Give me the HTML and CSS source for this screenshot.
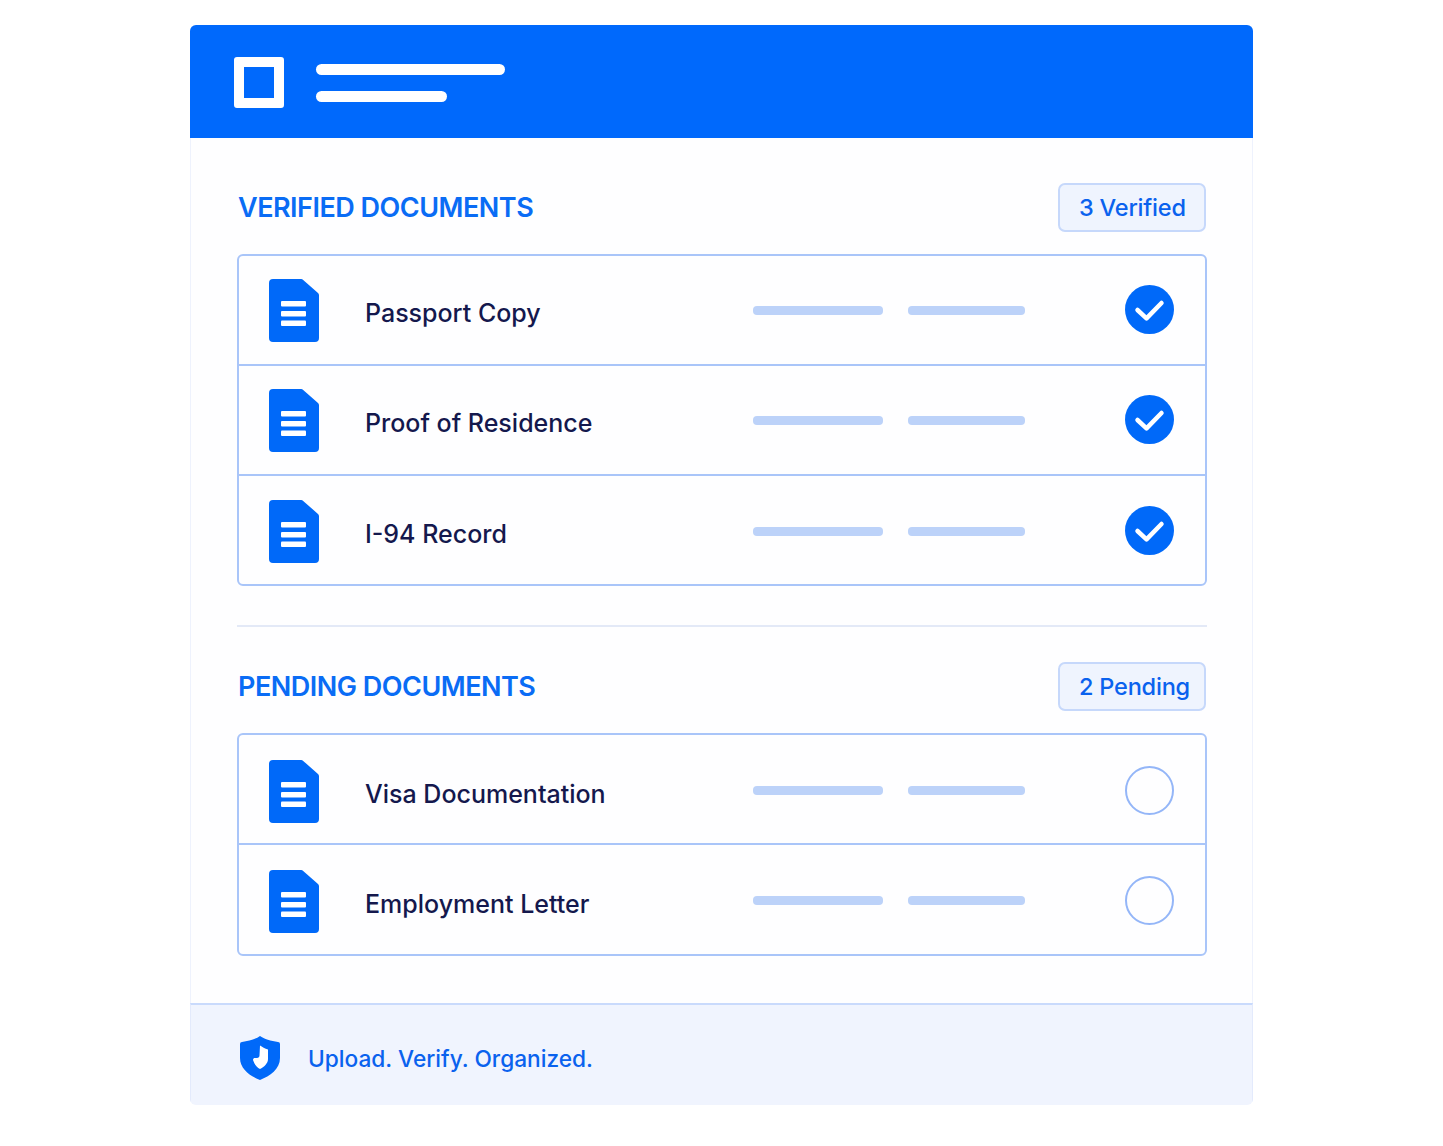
FILE: index.html
```html
<!DOCTYPE html>
<html lang="en">
<head>
<meta charset="utf-8">
<title>Documents</title>
<link rel="stylesheet" href="styles.css">
</head>
<body>
<svg class="defs" width="0" height="0" aria-hidden="true">
  <symbol id="doc" viewBox="0 0 50 63">
    <path d="M4 0H32a3 3 0 0 1 2.200 .9L49 14a3 3 0 0 1 1 2.200V59a4 4 0 0 1-4 4H4a4 4 0 0 1-4-4V4a4 4 0 0 1 4-4Z" fill="#0069f9"/>
    <rect x="12" y="22" width="25" height="5.500" rx="1" fill="#fff"/>
    <rect x="12" y="32" width="25" height="5.500" rx="1" fill="#fff"/>
    <rect x="12" y="41.500" width="25" height="5.500" rx="1" fill="#fff"/>
  </symbol>
  <symbol id="check" viewBox="0 0 49 49">
    <circle cx="24.500" cy="24.500" r="24.500" fill="#0069f9"/>
    <path d="M12.500 25l9 8.300L36.500 18" fill="none" stroke="#fff" stroke-width="4.500" stroke-linecap="round" stroke-linejoin="round"/>
  </symbol>
</svg>
<main class="card">
  <header class="top">
    <div class="logo"></div>
    <div class="top-lines">
      <div class="top-line top-line-long"></div>
      <div class="top-line top-line-short"></div>
    </div>
  </header>
  <div class="content">
    <section class="section">
      <div class="section-head">
        <h2 class="section-title">VERIFIED DOCUMENTS</h2>
        <span class="badge">3 Verified</span>
      </div>
      <ul class="doc-list">
        <li class="doc-row">
          <svg class="doc-icon"><use href="#doc"/></svg>
          <span class="doc-name">Passport Copy</span>
          <span class="bar bar-a"></span><span class="bar bar-b"></span>
          <svg class="status"><use href="#check"/></svg>
        </li>
        <li class="doc-row">
          <svg class="doc-icon"><use href="#doc"/></svg>
          <span class="doc-name">Proof of Residence</span>
          <span class="bar bar-a"></span><span class="bar bar-b"></span>
          <svg class="status"><use href="#check"/></svg>
        </li>
        <li class="doc-row doc-row-tall">
          <svg class="doc-icon"><use href="#doc"/></svg>
          <span class="doc-name">I-94 Record</span>
          <span class="bar bar-a"></span><span class="bar bar-b"></span>
          <svg class="status"><use href="#check"/></svg>
        </li>
      </ul>
    </section>
    <hr class="divider">
    <section class="section">
      <div class="section-head">
        <h2 class="section-title">PENDING DOCUMENTS</h2>
        <span class="badge">2 Pending</span>
      </div>
      <ul class="doc-list doc-list-low">
        <li class="doc-row">
          <svg class="doc-icon"><use href="#doc"/></svg>
          <span class="doc-name">Visa Documentation</span>
          <span class="bar bar-a"></span><span class="bar bar-b"></span>
          <span class="status status-empty"></span>
        </li>
        <li class="doc-row">
          <svg class="doc-icon"><use href="#doc"/></svg>
          <span class="doc-name">Employment Letter</span>
          <span class="bar bar-a"></span><span class="bar bar-b"></span>
          <span class="status status-empty"></span>
        </li>
      </ul>
    </section>
  </div>
  <footer class="foot">
    <svg class="shield" viewBox="0 0 40 44">
      <path d="M20 0C24 3 31 5 38 6a2 2 0 0 1 2 2V22C40 33 30 40 20 44C10 40 0 33 0 22V8a2 2 0 0 1 2-2C9 5 16 3 20 0Z" fill="#0069f9"/>
      <path d="M20 9.500C22 11 25 12.500 28 13.500V23C28 27.500 24 31 20 33C17 31.500 14.500 28.500 13 24C13 22.500 14 22 15 22H17C18.500 22 19.500 21 19.500 19.500Z" fill="#fff"/>
    </svg>
    <span class="foot-text">Upload. Verify. Organized.</span>
  </footer>
</main>
</body>
</html>
```
FILE: styles.css
```css
* { box-sizing: border-box; }
html, body { margin: 0; padding: 0; background: #fff; }
body { font-family: Inter, "Liberation Sans", sans-serif; padding: 25px 190px 41px; }
.defs { position: absolute; }
.card {
  width: 1063px;
  height: 1080px;
  display: flex;
  flex-direction: column;
  background: #fefeff;
  border-radius: 6px;
  overflow: hidden;
}
.top {
  height: 113px;
  flex: none;
  background: #0069fc;
  display: flex;
  align-items: flex-start;
  padding: 32px 0 0 44px;
  gap: 32px;
}
.logo {
  width: 50px;
  height: 51px;
  border: 10px solid #fff;
  border-radius: 3px;
  flex: none;
}
.top-lines { display: flex; flex-direction: column; gap: 16px; padding-top: 7px; }
.top-line { height: 11px; background: #fff; border-radius: 6px; }
.top-line-long { width: 189px; }
.top-line-short { width: 131px; }
.content {
  flex: 1;
  padding: 45px 45px 0 46px;
  border-left: 1px solid #eef2fd;
  border-right: 1px solid #eef2fd;
}
.section-head {
  height: 49px;
  display: flex;
  align-items: center;
  justify-content: space-between;
  margin-bottom: 22px;
  padding-right: 1px;
}
.section-title {
  margin: 0;
  padding-left: 1px;
  font-size: 27px;
  font-weight: 600;
  letter-spacing: -0.5px;
  color: #0a6cf5;
}
.badge {
  width: 148px;
  height: 49px;
  display: flex;
  align-items: center;
  padding-left: 19px;
  background: #eff4fe;
  border: 2px solid #c6d8fb;
  border-radius: 7px;
  font-size: 23.500px;
  font-weight: 500;
  letter-spacing: -0.2px;
  color: #0a62ee;
  white-space: nowrap;
}
.doc-list {
  list-style: none;
  margin: 0;
  padding: 0;
  border: 2px solid #a9c5f9;
  border-radius: 6px;
}
.doc-row {
  height: 110px;
  display: flex;
  align-items: center;
  padding: 0 31px 0 30px;
  border-top: 2px solid #a9c5f9;
}
.doc-row:first-child { height: 108px; border-top: 0; }
.doc-row-tall { padding-top: 3px; }
.doc-list-low .doc-row { padding-top: 5px; }
.doc-list-low .doc-row:last-child { height: 111px; padding-top: 4px; }
.doc-list-low .bar { margin-bottom: 2px; }
.doc-icon { width: 50px; height: 63px; flex: none; }
.doc-name {
  flex: 1;
  margin-left: 46px;
  padding-top: 5px;
  font-size: 25px;
  font-weight: 500;
  color: #14184d;
  white-space: nowrap;
}
.bar { height: 9px; background: #bcd2f9; border-radius: 4px; flex: none; }
.bar-a { width: 130px; }
.bar-b { width: 117px; margin-left: 25px; margin-right: 100px; }
.status { width: 49px; height: 49px; flex: none; margin-bottom: 2px; }
.status-empty { border: 2px solid #94b6f8; border-radius: 50%; }
.divider { height: 2px; margin: 39px 0 35px; border: 0; background: #e3e9f7; }
.foot {
  height: 102px;
  flex: none;
  display: flex;
  align-items: center;
  gap: 28px;
  padding: 6px 0 0 49px;
  background: #f0f4fe;
  border-top: 2px solid #c9dafc;
  border-left: 1px solid #e3eafc;
  border-right: 1px solid #e3eafc;
}
.shield { width: 40px; height: 44px; flex: none; }
.foot-text { font-size: 22.700px; font-weight: 500; color: #0a62ee; }
```
